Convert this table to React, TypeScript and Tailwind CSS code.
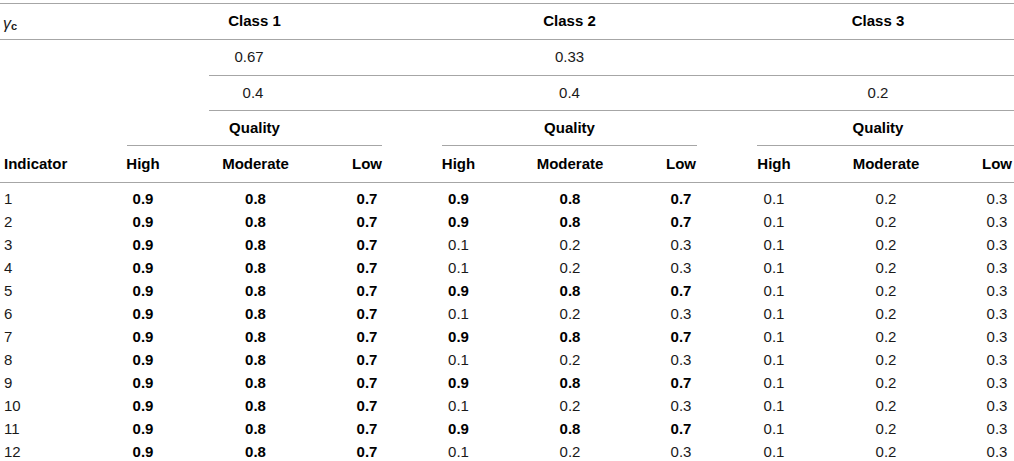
import React from "react";

const boldRows = new Set([1, 2, 5, 7, 9, 11]);

function Cell({ children, bold, className = "" }: { children: React.ReactNode; bold?: boolean; className?: string }) {
  return (
    <div className={`flex items-center justify-center ${bold ? "font-bold text-black" : ""} ${className}`}>{children}</div>
  );
}

export default function App() {
  const grid =
    "grid grid-cols-[127px_32px_193px_30px_60px_33px_190px_32px_60px_34px_190px_32px_1fr]";
  const rows = Array.from({ length: 12 }, (_, i) => i + 1);
  return (
    <div
      className="w-[1014px] h-[461px] overflow-hidden bg-white text-[15px] text-[#1a1a1a]"
      style={{ fontFamily: '"Liberation Sans", Arial, sans-serif' }}
    >
      {/* Row A */}
      <div className={`${grid} mt-[3px] h-[37px] border-t border-b border-[#a6a6a6]`}>
        <div className="flex items-center pl-[3px] pt-[4px]">
          <span className="italic text-[16px]">γ</span>
          <span className="font-bold text-[11px] mt-[6px]">c</span>
        </div>
        <Cell bold className="col-span-3">Class 1</Cell>
        <div />
        <Cell bold className="col-span-3">Class 2</Cell>
        <div />
        <Cell bold className="col-span-4 pr-[15px]">Class 3</Cell>
      </div>
      {/* Row B */}
      <div className="flex h-[36px] ml-[209px] border-b border-[#a6a6a6]">
        <Cell className="w-[80px]">0.67</Cell>
        <div className="w-[153px]" />
        <Cell className="w-[255px]">0.33</Cell>
      </div>
      {/* Row C */}
      <div className="flex h-[35px] ml-[209px] border-b border-[#a6a6a6]">
        <Cell className="w-[88px]">0.4</Cell>
        <div className="w-[145px]" />
        <Cell className="w-[255px]">0.4</Cell>
        <div className="w-[60px]" />
        <Cell className="w-[242px]">0.2</Cell>
      </div>
      {/* Row D */}
      <div className={`${grid} h-[35px]`}>
        <div />
        <Cell bold className="col-span-3 border-b border-[#a6a6a6]">Quality</Cell>
        <div />
        <Cell bold className="col-span-3 border-b border-[#a6a6a6]">Quality</Cell>
        <div />
        <Cell bold className="col-span-4 pr-[15px] border-b border-[#a6a6a6]">Quality</Cell>
      </div>
      {/* Row E */}
      <div className={`${grid} h-[37px] border-b border-[#a6a6a6] font-bold text-black`}>
        <div className="flex items-center pl-[4px]">Indicator</div>
        <Cell>High</Cell>
        <Cell>Moderate</Cell>
        <Cell>Low</Cell>
        <div />
        <Cell>High</Cell>
        <Cell>Moderate</Cell>
        <Cell>Low</Cell>
        <div />
        <Cell>High</Cell>
        <Cell>Moderate</Cell>
        <Cell>Low</Cell>
        <div />
      </div>
      {/* Data */}
      <div className="pt-[5px]">
        {rows.map((r) => {
          const b = boldRows.has(r);
          return (
            <div key={r} className={`${grid} h-[23px]`}>
              <div className="flex items-center pl-[4px]">{r}</div>
              <Cell bold>0.9</Cell>
              <Cell bold>0.8</Cell>
              <Cell bold>0.7</Cell>
              <div />
              <Cell bold={b}>{b ? "0.9" : "0.1"}</Cell>
              <Cell bold={b}>{b ? "0.8" : "0.2"}</Cell>
              <Cell bold={b}>{b ? "0.7" : "0.3"}</Cell>
              <div />
              <Cell>0.1</Cell>
              <Cell>0.2</Cell>
              <Cell>0.3</Cell>
              <div />
            </div>
          );
        })}
      </div>
    </div>
  );
}
